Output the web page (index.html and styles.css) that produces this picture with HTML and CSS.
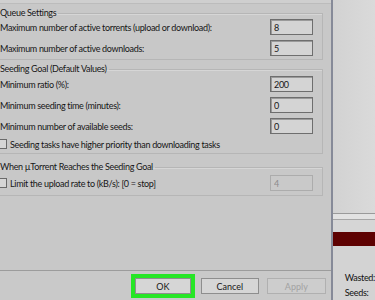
FILE: index.html
```html
<!DOCTYPE html>
<html>
<head>
	<meta http-equiv="Content-Type" content="text/html; charset=UTF-8">
	<meta name="viewport" content="width=device-width, initial-scale=1">
	<title>Preferences - Queueing</title>
	<link rel="stylesheet" href="styles.css">
</head>
<body>
	<div id="screen">
		<div id="dialog">
			<div class="topbar"></div>
			<div class="panel">
				<fieldset class="group g1">
					<legend>Queue Settings</legend>
					<div class="row">
						<label for="maxact">Maximum number of active torrents (upload or download):</label>
						<input type="text" id="maxact" class="input_text" value="8">
					</div>
					<div class="row">
						<label for="maxdl">Maximum number of active downloads:</label>
						<input type="text" id="maxdl" class="input_text" value="5">
					</div>
				</fieldset>

				<fieldset class="group g2">
					<legend>Seeding Goal (Default Values)</legend>
					<div class="row">
						<label for="ratio">Minimum ratio (%):</label>
						<input type="text" id="ratio" class="input_text" value="200">
					</div>
					<div class="row">
						<label for="seedtime">Minimum seeding time (minutes):</label>
						<input type="text" id="seedtime" class="input_text" value="0">
					</div>
					<div class="row">
						<label for="minseeds">Minimum number of available seeds:</label>
						<input type="text" id="minseeds" class="input_text" value="0">
					</div>
					<div class="check">
						<span class="box"></span>
						<span>Seeding tasks have higher priority than downloading tasks</span>
					</div>
				</fieldset>

				<fieldset class="group g3">
					<legend>When µTorrent Reaches the Seeding Goal</legend>
					<div class="row">
						<div class="check">
							<span class="box"></span>
							<span>Limit the upload rate to (kB/s): [0 = stop]</span>
						</div>
						<input type="text" class="input_text disabled" value="4" readonly>
					</div>
				</fieldset>
			</div>

			<div class="buttons">
				<button class="btn btn-ok">OK</button>
				<button class="btn btn-cancel">Cancel</button>
				<button class="btn btn-apply">Apply</button>
			</div>
		</div>

		<div id="side">
			<div class="side-top"></div>
			<div class="side-tabs"></div>
			<div class="side-gap"></div>
			<div class="side-bar"></div>
			<div class="side-info">
				<div>Wasted:</div>
				<div>Seeds:</div>
			</div>
		</div>
	</div>
</body>
</html>
```

FILE: styles.css
```css
body {
	margin: 0;
	font-family: Lato, "Noto Sans", sans-serif;
	font-size: 9px;
	letter-spacing: -0.32px;
	color: #161616;
	background: #c9c9c9;
	overflow: hidden;
}

#screen {
	display: flex;
	width: 375px;
	height: 300px;
}

#dialog {
	width: 333px;
	display: flex;
	flex-direction: column;
	background: #c8c8c8;
	border-right: 2px solid #868a98;
}

.topbar {
	height: 3px;
	background: #cfcfcf;
	border-bottom: 1px solid #bcbcbc;
}

.panel {
	flex: 1;
	margin-left: -8px;
	width: 331px;
}

.group {
	margin: 3px 0 0 0;
	padding: 0 9px 3px 7px;
	border: 1px solid #b6b6b6;
	box-shadow: inset 1px 1px 0 #d6d6d6;
}

.group legend {
	padding: 0 2px;
	margin-left: -2px;
	line-height: 12px;
}

.g2 {
	padding-top: 1px;
	padding-bottom: 3px;
}

.g3 {
	margin-top: 7px;
	padding-top: 2px;
	padding-bottom: 4px;
}

.row {
	display: flex;
	align-items: center;
	justify-content: space-between;
	height: 16px;
}

.row + .row {
	margin-top: 5px;
}

label {
	display: inline-block;
}

.input_text {
	font-family: inherit;
	font-size: 9px;
	letter-spacing: inherit;
	color: #161616;
	width: 43px;
	height: 16px;
	box-sizing: border-box;
	padding: 0 3px;
	margin: 0;
	border: 1px solid #6e6e6e;
	background: #d4d4d4;
	box-shadow: inset 1px 1px 0 #9a9a9a;
	-webkit-appearance: none;
}

.input_text.disabled {
	color: #8c8c8c;
	border-color: #acacac;
	background: #c9c9c9;
	box-shadow: none;
}

.check {
	display: flex;
	align-items: center;
	gap: 3px;
	height: 12px;
	margin-left: -3px;
}

.g2 .check {
	margin-top: 4px;
}

.box {
	width: 8px;
	height: 8px;
	border: 1px solid #6a6a6a;
	background: #d6d6d6;
}

.buttons {
	display: flex;
	justify-content: flex-end;
	align-items: flex-start;
	height: 30px;
	box-sizing: border-box;
	padding: 7px 5px 0 0;
	border-top: 1px solid #9c9c9c;
	background: #c9c9c9;
}

.btn {
	font-family: inherit;
	font-size: 9px;
	color: #161616;
	height: 16px;
	width: 58px;
	padding: 0;
	margin-left: 8px;
	border: 1px solid #8e8e8e;
	background: #d6d6d6;
}

.btn-ok {
	width: 56px;
	margin-right: 2px;
	outline: 4px solid #26e626;
}

.btn-apply {
	width: 59px;
	color: #a2a2a2;
	border-color: #b0b0b0;
	background: #cdcdcd;
}

#side {
	flex: 1;
	display: flex;
	flex-direction: column;
	background: #d3d3d3;
}

.side-top {
	height: 214px;
	background: linear-gradient(to right, #d2d2d2, #dadada);
}

.side-tabs {
	height: 5px;
	border-top: 1px solid #9a9a9a;
	border-bottom: 1px solid #a6a6a6;
	background: #e2e2e2;
}

.side-gap {
	height: 12px;
	background: #d6d6d6;
}

.side-bar {
	height: 14px;
	background: #5e0202;
}

.side-info {
	flex: 1;
	padding: 24px 0 0 12px;
	line-height: 15px;
	color: #111;
}
```
